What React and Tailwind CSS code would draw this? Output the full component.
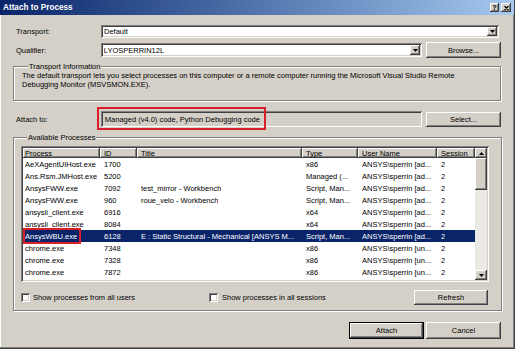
import React from "react";

const raised =
  "bg-[#d4d0c8] shadow-[inset_-1px_-1px_0_#404040,inset_1px_1px_0_#ffffff,inset_-2px_-2px_0_#808080,inset_2px_2px_0_#d4d0c8]";
const sunken =
  "shadow-[inset_1px_1px_0_#808080,inset_-1px_-1px_0_#ffffff,inset_2px_2px_0_#404040,inset_-2px_-2px_0_#d4d0c8]";
const etched =
  "border border-[#808080] shadow-[inset_1px_1px_0_#ffffff,1px_1px_0_#ffffff]";

const cols = "grid grid-cols-[77px_37px_165px_56px_79px_38px]";

const rows = [
  ["AeXAgentUIHost.exe", "1700", "", "x86", "ANSYS\\sperrin [ad...", "2"],
  ["Ans.Rsm.JMHost.exe", "5200", "", "Managed (...", "ANSYS\\sperrin [ad...", "2"],
  ["AnsysFWW.exe", "7092", "test_mirror - Workbench", "Script, Man...", "ANSYS\\sperrin [ad...", "2"],
  ["AnsysFWW.exe", "960", "roue_velo - Workbench", "Script, Man...", "ANSYS\\sperrin [ad...", "2"],
  ["ansysli_client.exe", "6916", "", "x64", "ANSYS\\sperrin [ad...", "2"],
  ["ansysli_client.exe", "8084", "", "x64", "ANSYS\\sperrin [ad...", "2"],
  ["AnsysWBU.exe", "6128", "E : Static Structural - Mechanical [ANSYS M...", "Script, Man...", "ANSYS\\sperrin [ad...", "2"],
  ["chrome.exe", "7348", "", "x86", "ANSYS\\sperrin [un...", "2"],
  ["chrome.exe", "7328", "", "x86", "ANSYS\\sperrin [un...", "2"],
  ["chrome.exe", "7872", "", "x86", "ANSYS\\sperrin [un...", "2"],
  ["chrome.exe", "5552", "", "x86", "ANSYS\\sperrin [un...", "2"],
];

function DownArrow() {
  return (
    <svg width="5" height="3" viewBox="0 0 5 3">
      <polygon points="0,0 5,0 2.5,3" fill="#000" />
    </svg>
  );
}
function UpArrow() {
  return (
    <svg width="5" height="3" viewBox="0 0 5 3">
      <polygon points="0,3 5,3 2.5,0" fill="#000" />
    </svg>
  );
}

function Btn({ children, className = "" }) {
  return (
    <div className={`${raised} flex items-center justify-center ${className}`}>
      {children}
    </div>
  );
}

function Checkbox() {
  return <div className={`w-[9px] h-[9px] bg-white ${sunken} shrink-0`} />;
}

export default function App() {
  return (
    <div className="w-[515px] h-[349px] bg-[#d4d0c8] overflow-hidden flex flex-col font-['Liberation_Sans',Arial,sans-serif] text-[7.5px] text-black leading-[9px] border-r border-b border-[#404040] shadow-[inset_-1px_-1px_0_#808080,inset_1px_0_0_#ffffff]">
      {/* title bar */}
      <div className="h-[15px] shrink-0 flex items-center bg-linear-to-r from-[#0a246a] to-[#a6caf0]">
        <span className="pl-[3px] text-white font-bold text-[8.2px] leading-[10px]">
          Attach to Process
        </span>
        <div className="ml-auto mr-[3px] flex gap-[2px]">
          <Btn className="w-[9px] h-[9px]">
            <span className="text-[7px] font-bold leading-[7px]">?</span>
          </Btn>
          <Btn className="w-[10px] h-[9px]">
            <svg width="5" height="4" viewBox="0 0 5 4">
              <path d="M0.5 0 L4.5 4 M4.5 0 L0.5 4" stroke="#000" strokeWidth="1.2" />
            </svg>
          </Btn>
        </div>
      </div>

      <div className="px-[13px] flex flex-col">
        {/* Transport */}
        <div className="mt-[10px] h-[13px] flex items-center">
          <div className="w-[88px] pl-[3px]">Transport:</div>
          <div className={`flex-1 mr-[2px] h-[13px] bg-white ${sunken} flex items-center pl-[3px] pr-[2px]`}>
            <span>Default</span>
            <Btn className="ml-auto w-[10px] h-[9px]">
              <DownArrow />
            </Btn>
          </div>
        </div>

        {/* Qualifier */}
        <div className="mt-[4px] h-[16px] flex items-center">
          <div className="w-[88px] pl-[3px]">Qualifier:</div>
          <div className={`w-[322px] h-[14px] bg-white ${sunken} flex items-center pl-[3px] pr-[2px]`}>
            <span>LYOSPERRIN12L</span>
            <Btn className="ml-auto w-[10px] h-[10px]">
              <DownArrow />
            </Btn>
          </div>
          <Btn className="ml-[4px] w-[75px] h-[16px]">Browse...</Btn>
        </div>

        {/* Transport Information */}
        <fieldset className={`mt-[4px] ${etched} px-[8px] pb-[11px]`}>
          <legend className="ml-[6px] px-[1px] bg-[#d4d0c8] leading-[9px]">
            Transport Information
          </legend>
          <div className="whitespace-nowrap leading-[9px]">
            The default transport lets you select processes on this computer or a remote computer running the Microsoft Visual Studio Remote
            <br />
            Debugging Monitor (MSVSMON.EXE).
          </div>
        </fieldset>

        {/* Attach to */}
        <div className="mt-[10px] h-[16px] flex items-center">
          <div className="w-[88px] pl-[3px]">Attach to:</div>
          <div className={`relative w-[322px] h-[16px] bg-[#d4d0c8] ${sunken} flex items-center pl-[4px]`}>
            <span>Managed (v4.0) code, Python Debugging code</span>
            <div className="absolute left-[-4px] top-[-4px] w-[169px] h-[23px] border-2 border-[#d9202a]" />
          </div>
          <Btn className="ml-[4px] w-[75px] h-[15px]">Select...</Btn>
        </div>

        {/* Available Processes */}
        <fieldset className={`mt-[6px] ${etched} pl-[7px] pr-[12px] pt-[4px] pb-[5px]`}>
          <legend className="ml-[6px] px-[1px] bg-[#d4d0c8] leading-[9px]">
            Available Processes
          </legend>

          <div className={`h-[136px] bg-white ${sunken} p-[2px] flex`}>
            <div className="flex-1 flex flex-col overflow-hidden">
              <div className={`${cols} h-[10px] shrink-0`}>
                {["Process", "ID", "Title", "Type", "User Name", "Session"].map((h, i) => (
                  <div
                    key={h}
                    className={`${raised} flex items-center ${i === 0 ? "pl-[2px]" : "pl-[4px]"} whitespace-nowrap overflow-hidden`}
                  >
                    {h}
                  </div>
                ))}
              </div>
              <div className="flex-1 overflow-hidden">
                {rows.map((r, ri) => {
                  const sel = ri === 6;
                  return (
                    <div
                      key={ri}
                      className={`${cols} h-[12px] ${sel ? "bg-[#0a246a] text-white" : ""}`}
                    >
                      {r.map((c, ci) => (
                        <div
                          key={ci}
                          className={`relative flex items-center whitespace-nowrap ${ci === 0 ? "pl-[2px]" : "pl-[4px]"}`}
                        >
                          <span className="overflow-hidden">{c}</span>
                          {sel && ci === 0 && (
                            <div className="absolute left-0 top-[-2px] w-[58px] h-[16px] border-2 border-[#d9202a]" />
                          )}
                        </div>
                      ))}
                    </div>
                  );
                })}
              </div>
            </div>
            {/* scrollbar */}
            <div className="w-[12px] flex flex-col bg-[#ebe9e3]">
              <Btn className="h-[10px] shrink-0">
                <UpArrow />
              </Btn>
              <div className={`${raised} h-[32px] shrink-0`} />
              <div className="flex-1" />
              <Btn className="h-[10px] shrink-0">
                <DownArrow />
              </Btn>
            </div>
          </div>

          <div className="mt-[8px] h-[15px] flex items-center">
            <div className="w-[188px] flex items-center gap-[2px]">
              <Checkbox />
              <span className="ml-[1px]">Show processes from all users</span>
            </div>
            <div className="flex items-center gap-[2px]">
              <Checkbox />
              <span className="ml-[2px]">Show processes in all sessions</span>
            </div>
            <Btn className="ml-auto mr-[1px] w-[74px] h-[15px]">Refresh</Btn>
          </div>
        </fieldset>

        {/* Bottom buttons */}
        <div className="mt-[11px] h-[17px] flex justify-end">
          <div className="w-[75px] h-[17px] border border-black">
            <Btn className="w-full h-full">Attach</Btn>
          </div>
          <Btn className="ml-[2px] w-[75px] h-[17px]">Cancel</Btn>
        </div>
      </div>
    </div>
  );
}
